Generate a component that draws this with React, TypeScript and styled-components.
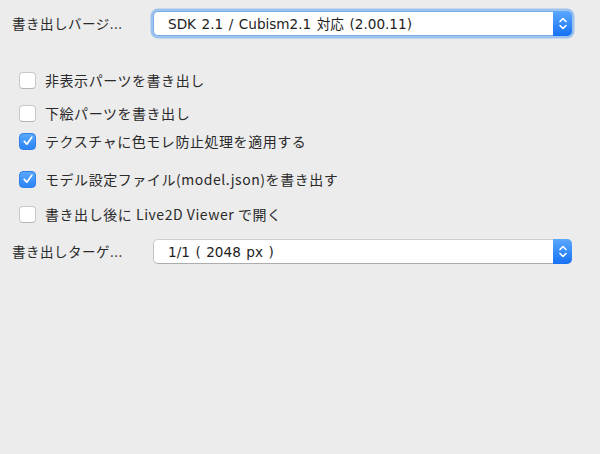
import React from "react";
import styled, { createGlobalStyle, css } from "styled-components";

const Global = createGlobalStyle`
  html, body { margin: 0; padding: 0; background: #ececec; }
  body {
    font-family: "Noto Sans CJK JP", "Noto Sans", "Liberation Sans", sans-serif;
    color: #262626;
    width: 600px; height: 454px; overflow: hidden;
  }
`;

const Panel = styled.div`
  width: 600px;
  height: 454px;
  background: #ececec;
  box-sizing: border-box;
  padding: 11px 0 0 12px;
  display: flex;
  flex-direction: column;
`;

const FieldRow = styled.div<{ $mt?: number }>`
  display: grid;
  grid-template-columns: 141px 419px;
  align-items: center;
  height: 25px;
  margin-top: ${(p) => p.$mt ?? 0}px;
`;

const FieldLabel = styled.div`
  font-size: 13.5px;
  letter-spacing: 0.5px;
  line-height: 25px;
  white-space: nowrap;
  color: #2a2a2a;
`;

const SelectBox = styled.div<{ $focused?: boolean }>`
  position: relative;
  height: 25px;
  box-sizing: border-box;
  display: flex;
  align-items: stretch;
  background: #fff;
  border-radius: 5px;
  border: 1px solid #c4c4c4;
  border-top-color: #cfcfcf;
  border-bottom-color: #acacac;
  ${(p) =>
    p.$focused &&
    css`
      border-color: #7aaee8;
      box-shadow: 0 0 0 2.5px rgba(92, 160, 240, 0.55);
    `}
`;

const SelectText = styled.div`
  flex: 1;
  padding-left: 14px;
  font-size: 13.6px;
  word-spacing: 1.2px;
  line-height: 24px;
  white-space: nowrap;
  color: #1e1e1e;
  font-family: "DejaVu Sans", "Noto Sans CJK JP", sans-serif;
`;

const Stepper = styled.div`
  width: 19px;
  margin: -1px -1px -1px 0;
  border-radius: 0 5px 5px 0;
  background: linear-gradient(#5aa8ff, #1672f4);
  display: flex;
  align-items: center;
  justify-content: center;
`;

const Options = styled.div`
  display: flex;
  flex-direction: column;
  padding-left: 7px;
  margin-top: 35px;
`;

const OptionRow = styled.label<{ $mt: number }>`
  display: flex;
  align-items: center;
  gap: 9px;
  height: 18px;
  margin-top: ${(p) => p.$mt}px;
  font-size: 14px;
  color: #2a2a2a;
  white-space: nowrap;
`;

const Box = styled.span<{ $checked: boolean }>`
  width: 17px;
  height: 17px;
  box-sizing: border-box;
  border-radius: 4px;
  display: flex;
  align-items: center;
  justify-content: center;
  flex: none;
  ${(p) =>
    p.$checked
      ? css`
          background: linear-gradient(#5aa8ff, #2a84f6);
          border: 1px solid #2f7fe6;
        `
      : css`
          background: #fff;
          border: 1px solid #c8c8c8;
          border-bottom-color: #b5b5b5;
        `}
`;

const OptionText = styled.span`
  font-size: 14px;
  letter-spacing: 0.55px;
`;

const Arrows = () => (
  <svg width="10" height="15" viewBox="0 0 10 15">
    <path d="M2 5.5 L5 2.5 L8 5.5" fill="none" stroke="#fff" strokeWidth="1.6" strokeLinecap="round" strokeLinejoin="round" />
    <path d="M2 9.5 L5 12.5 L8 9.5" fill="none" stroke="#fff" strokeWidth="1.6" strokeLinecap="round" strokeLinejoin="round" />
  </svg>
);

const Check = () => (
  <svg width="12" height="12" viewBox="0 0 12 12">
    <path d="M2.3 6.4 L4.8 9.2 L9.8 2.2" fill="none" stroke="#fff" strokeWidth="1.7" strokeLinecap="round" strokeLinejoin="round" />
  </svg>
);

const Select = ({ value, focused }: { value: string; focused?: boolean }) => (
  <SelectBox $focused={focused}>
    <SelectText>{value}</SelectText>
    <Stepper>
      <Arrows />
    </Stepper>
  </SelectBox>
);

const options = [
  { label: "非表示パーツを書き出し", checked: false, mt: 0 },
  { label: "下絵パーツを書き出し", checked: false, mt: 15 },
  { label: "テクスチャに色モレ防止処理を適用する", checked: true, mt: 10 },
  { label: "モデル設定ファイル(model.json)を書き出す", checked: true, mt: 20 },
  { label: "書き出し後に Live2D Viewer で開く", checked: false, mt: 17 },
];

export default function App() {
  return (
    <>
      <Global />
      <Panel>
        <FieldRow>
          <FieldLabel>書き出しバージ...</FieldLabel>
          <Select value="SDK 2.1 / Cubism2.1 対応 (2.00.11)" focused />
        </FieldRow>
        <Options>
          {options.map((o) => (
            <OptionRow key={o.label} $mt={o.mt}>
              <Box $checked={o.checked}>{o.checked && <Check />}</Box>
              <OptionText>{o.label}</OptionText>
            </OptionRow>
          ))}
        </Options>
        <FieldRow $mt={16}>
          <FieldLabel>書き出しターゲ...</FieldLabel>
          <Select value="1/1 ( 2048 px )" />
        </FieldRow>
      </Panel>
    </>
  );
}
